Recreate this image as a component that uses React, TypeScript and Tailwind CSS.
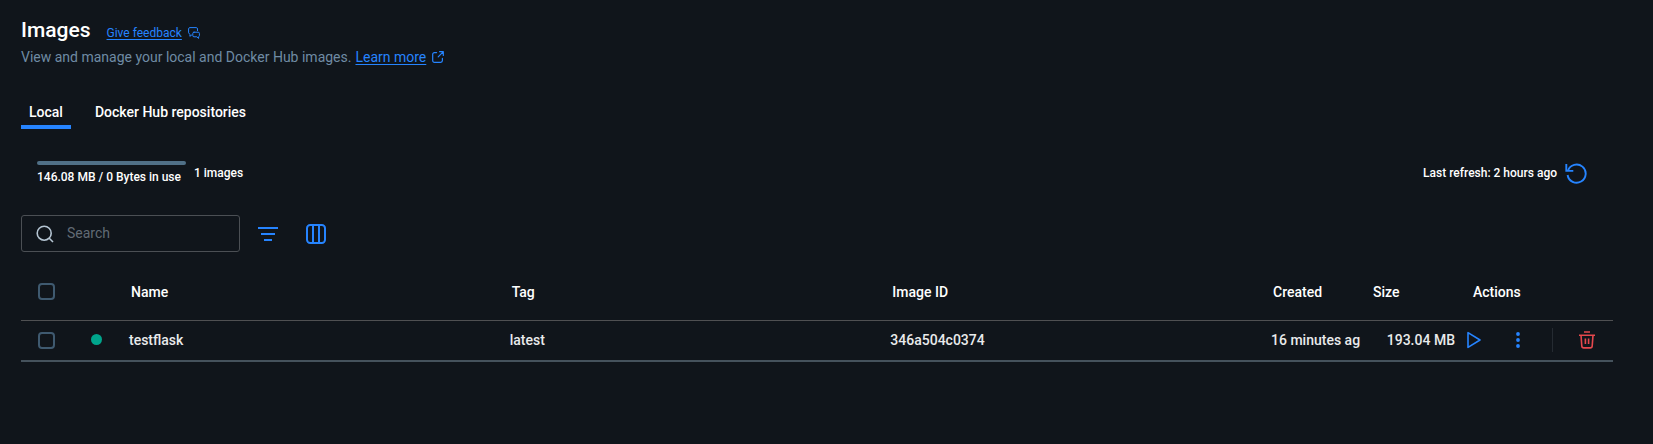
import React from "react";

type IconProps = { className?: string };

function FeedbackIcon({ className }: IconProps) {
  return (
    <svg viewBox="0 0 12 12" className={className} fill="none" stroke="currentColor" strokeWidth="1" strokeLinejoin="round" strokeLinecap="round" aria-hidden="true">
      <path d="M3.8 8.2H3.2L1.9 9.4V7.4L.6 5.8V1.9A1.3 1.3 0 0 1 1.9.6h6.3a1.3 1.3 0 0 1 1.3 1.3V3.6" />
      <path d="M6 5.2h4.2a1.2 1.2 0 0 1 1.2 1.2v2.2a1.2 1.2 0 0 1-.8 1.1v1.7L8.8 9.8H6a1.2 1.2 0 0 1-1.2-1.2V6.4A1.2 1.2 0 0 1 6 5.2Z" />
    </svg>
  );
}

function ExternalIcon({ className }: IconProps) {
  return (
    <svg viewBox="0 0 12 12" className={className} fill="none" stroke="currentColor" strokeWidth="1.2" strokeLinecap="round" strokeLinejoin="round" aria-hidden="true">
      <path d="M4.6 1.6H2.4A1.7 1.7 0 0 0 .7 3.3v6.3a1.7 1.7 0 0 0 1.7 1.7h6.3a1.7 1.7 0 0 0 1.7-1.7V7.4" />
      <path d="M7.6.7h3.7v3.7M11.1.9 6.2 5.8" />
    </svg>
  );
}

function RefreshIcon({ className }: IconProps) {
  return (
    <svg viewBox="0 0 22 22" className={className} fill="none" stroke="currentColor" strokeWidth="1.9" aria-hidden="true">
      <path d="M2.6 13A9.1 9.1 0 1 0 3 8.6" />
      <path d="M1.3 2v6.9h7" />
    </svg>
  );
}

function SearchIcon({ className }: IconProps) {
  return (
    <svg viewBox="0 0 18 18" className={className} fill="none" stroke="currentColor" strokeWidth="1.6" aria-hidden="true">
      <circle cx="8.2" cy="8.2" r="7" />
      <path d="m13 13 4 4" />
    </svg>
  );
}

function FilterIcon({ className }: IconProps) {
  return (
    <svg viewBox="0 0 20 20" className={className} fill="none" stroke="currentColor" strokeWidth="2" aria-hidden="true">
      <path d="M0 4h20M3 10h14M6 16h8" />
    </svg>
  );
}

function ColumnsIcon({ className }: IconProps) {
  return (
    <svg viewBox="0 0 20 20" className={className} fill="none" stroke="currentColor" strokeWidth="2" aria-hidden="true">
      <rect x="1" y="1" width="18" height="18" rx="3.2" />
      <path d="M7 1v18M13 1v18" />
    </svg>
  );
}

function PlayIcon({ className }: IconProps) {
  return (
    <svg viewBox="0 0 14 18" className={className} fill="none" stroke="currentColor" strokeWidth="1.6" strokeLinejoin="round" aria-hidden="true">
      <path d="M1 1.6v14.8L13 9Z" />
    </svg>
  );
}

function MoreIcon({ className }: IconProps) {
  return (
    <svg viewBox="0 0 4 16" className={className} fill="currentColor" aria-hidden="true">
      <circle cx="2" cy="2" r="1.9" />
      <circle cx="2" cy="8" r="1.9" />
      <circle cx="2" cy="14" r="1.9" />
    </svg>
  );
}

function TrashIcon({ className }: IconProps) {
  return (
    <svg viewBox="0 0 16 18" className={className} fill="none" stroke="currentColor" strokeWidth="1.6" aria-hidden="true">
      <path d="M5 1h6M0 4.2h16" />
      <path d="M2 4.2 2.8 15a2 2 0 0 0 2 1.9h6.4a2 2 0 0 0 2-1.9L14 4.2M6.4 7.5v5.4M9.6 7.5v5.4" />
    </svg>
  );
}

function Checkbox({ label }: { label: string }) {
  return (
    <input
      type="checkbox"
      aria-label={label}
      className="block size-[17px] appearance-none rounded-[4px] border-2 border-[#3f5a70] bg-transparent checked:bg-[#2684ff]"
    />
  );
}

const images = [
  { name: "testflask", tag: "latest", id: "346a504c0374", created: "16 minutes ag", size: "193.04 MB" },
];

export default function App() {
  return (
    <div className="min-h-screen bg-[#10151b] pt-4 pr-10 pl-[21px] font-['Roboto',sans-serif] text-white">
      <header>
        <div className="flex items-baseline gap-4">
          <h1 className="text-[21px] leading-7 font-medium">Images</h1>
          <a href="#feedback" className="flex items-center gap-[6px] text-[12px] leading-4 text-[#2684ff]">
            <span className="underline underline-offset-2">Give feedback</span>
            <FeedbackIcon className="size-3" />
          </a>
        </div>
        <p className="flex items-center gap-1 text-[14px] leading-[26px] text-[#6f8ba4]">
          View and manage your local and Docker Hub images.
          <a href="#learn" className="flex items-center gap-[6px] text-[#2684ff]">
            <span className="underline underline-offset-2">Learn more</span>
            <ExternalIcon className="size-3" />
          </a>
        </p>
      </header>

      <div role="tablist" className="mt-[30px] flex gap-4 text-[14px] leading-5 font-medium">
        <button role="tab" aria-selected="true" className="border-b-4 border-[#2684ff] px-2 pt-[2px] pb-[3px]">
          Local
        </button>
        <button role="tab" aria-selected="false" className="border-b-4 border-transparent px-2 pt-[2px] pb-[3px]">
          Docker Hub repositories
        </button>
      </div>

      <div className="mt-8 flex items-center justify-between pr-[26px] pl-4 text-[12px] leading-4 font-medium">
        <div className="flex items-center gap-2">
          <div className="min-w-[149px]">
            <div className="mb-1 h-1 rounded-full bg-[#507087]" />
            <div>146.08 MB / 0 Bytes in use</div>
          </div>
          <span>1 images</span>
        </div>
        <div className="flex items-center gap-2">
          <span>Last refresh: 2 hours ago</span>
          <button aria-label="Refresh" className="text-[#2684ff]">
            <RefreshIcon className="size-[22px]" />
          </button>
        </div>
      </div>

      <div className="mt-[30px] flex items-center">
        <label className="flex h-[37px] w-[219px] items-center gap-[13px] rounded-[3px] border border-[#4b4f54] pl-[14px] text-[#b5c5d3]">
          <SearchIcon className="size-[18px] shrink-0" />
          <input
            type="text"
            aria-label="Search"
            placeholder="Search"
            className="w-full min-w-0 bg-transparent text-[14px] text-white outline-none placeholder:text-[#626b75]"
          />
        </label>
        <button aria-label="Filter" className="ml-[18px] text-[#2684ff]">
          <FilterIcon className="size-5" />
        </button>
        <button aria-label="Columns" className="ml-7 text-[#2684ff]">
          <ColumnsIcon className="size-5" />
        </button>
      </div>

      <table className="mt-3 w-full table-fixed border-collapse text-left text-[14px] leading-5">
        <colgroup>
          <col className="w-[50px]" />
          <col className="w-[50px]" />
          <col />
          <col />
          <col />
          <col className="w-[100px]" />
          <col className="w-[100px]" />
          <col className="w-[150px]" />
        </colgroup>
        <thead>
          <tr className="h-14 border-b border-[#4f5052]">
            <th className="pl-[17px]">
              <Checkbox label="Select all images" />
            </th>
            <td />
            <th className="px-[10px] font-medium">Name</th>
            <th className="px-[10px] font-medium">Tag</th>
            <th className="px-[10px] font-medium">Image ID</th>
            <th className="px-[10px] font-medium">Created</th>
            <th className="px-[10px] font-medium">Size</th>
            <th className="px-[10px] font-medium">Actions</th>
          </tr>
        </thead>
        <tbody>
          {images.map((image) => (
            <tr key={image.id} className="h-[41px] border-b-2 border-[#45525c] font-medium text-[#e9eaeb]">
              <td className="pl-[17px]">
                <Checkbox label={"Select " + image.name} />
              </td>
              <td className="pb-[2px] pl-5">
                <div className="size-[11px] rounded-full bg-[#00a58c]" />
              </td>
              <td className="px-2">{image.name}</td>
              <td className="px-2">{image.tag}</td>
              <td className="px-2">{image.id}</td>
              <td className="overflow-hidden pl-2 whitespace-nowrap">{image.created}</td>
              <td className="px-2 text-right">{image.size}</td>
              <td className="pl-1">
                <div className="flex items-center text-[#2684ff]">
                  <button aria-label="Run">
                    <PlayIcon className="h-[18px] w-[14px]" />
                  </button>
                  <button aria-label="More actions" className="ml-[35px]">
                    <MoreIcon className="h-4 w-1" />
                  </button>
                  <div className="ml-8 h-6 w-px bg-[#252b32]" />
                  <button aria-label="Delete" className="ml-[26px] text-[#e5484d]">
                    <TrashIcon className="h-[18px] w-4" />
                  </button>
                </div>
              </td>
            </tr>
          ))}
        </tbody>
      </table>
    </div>
  );
}
